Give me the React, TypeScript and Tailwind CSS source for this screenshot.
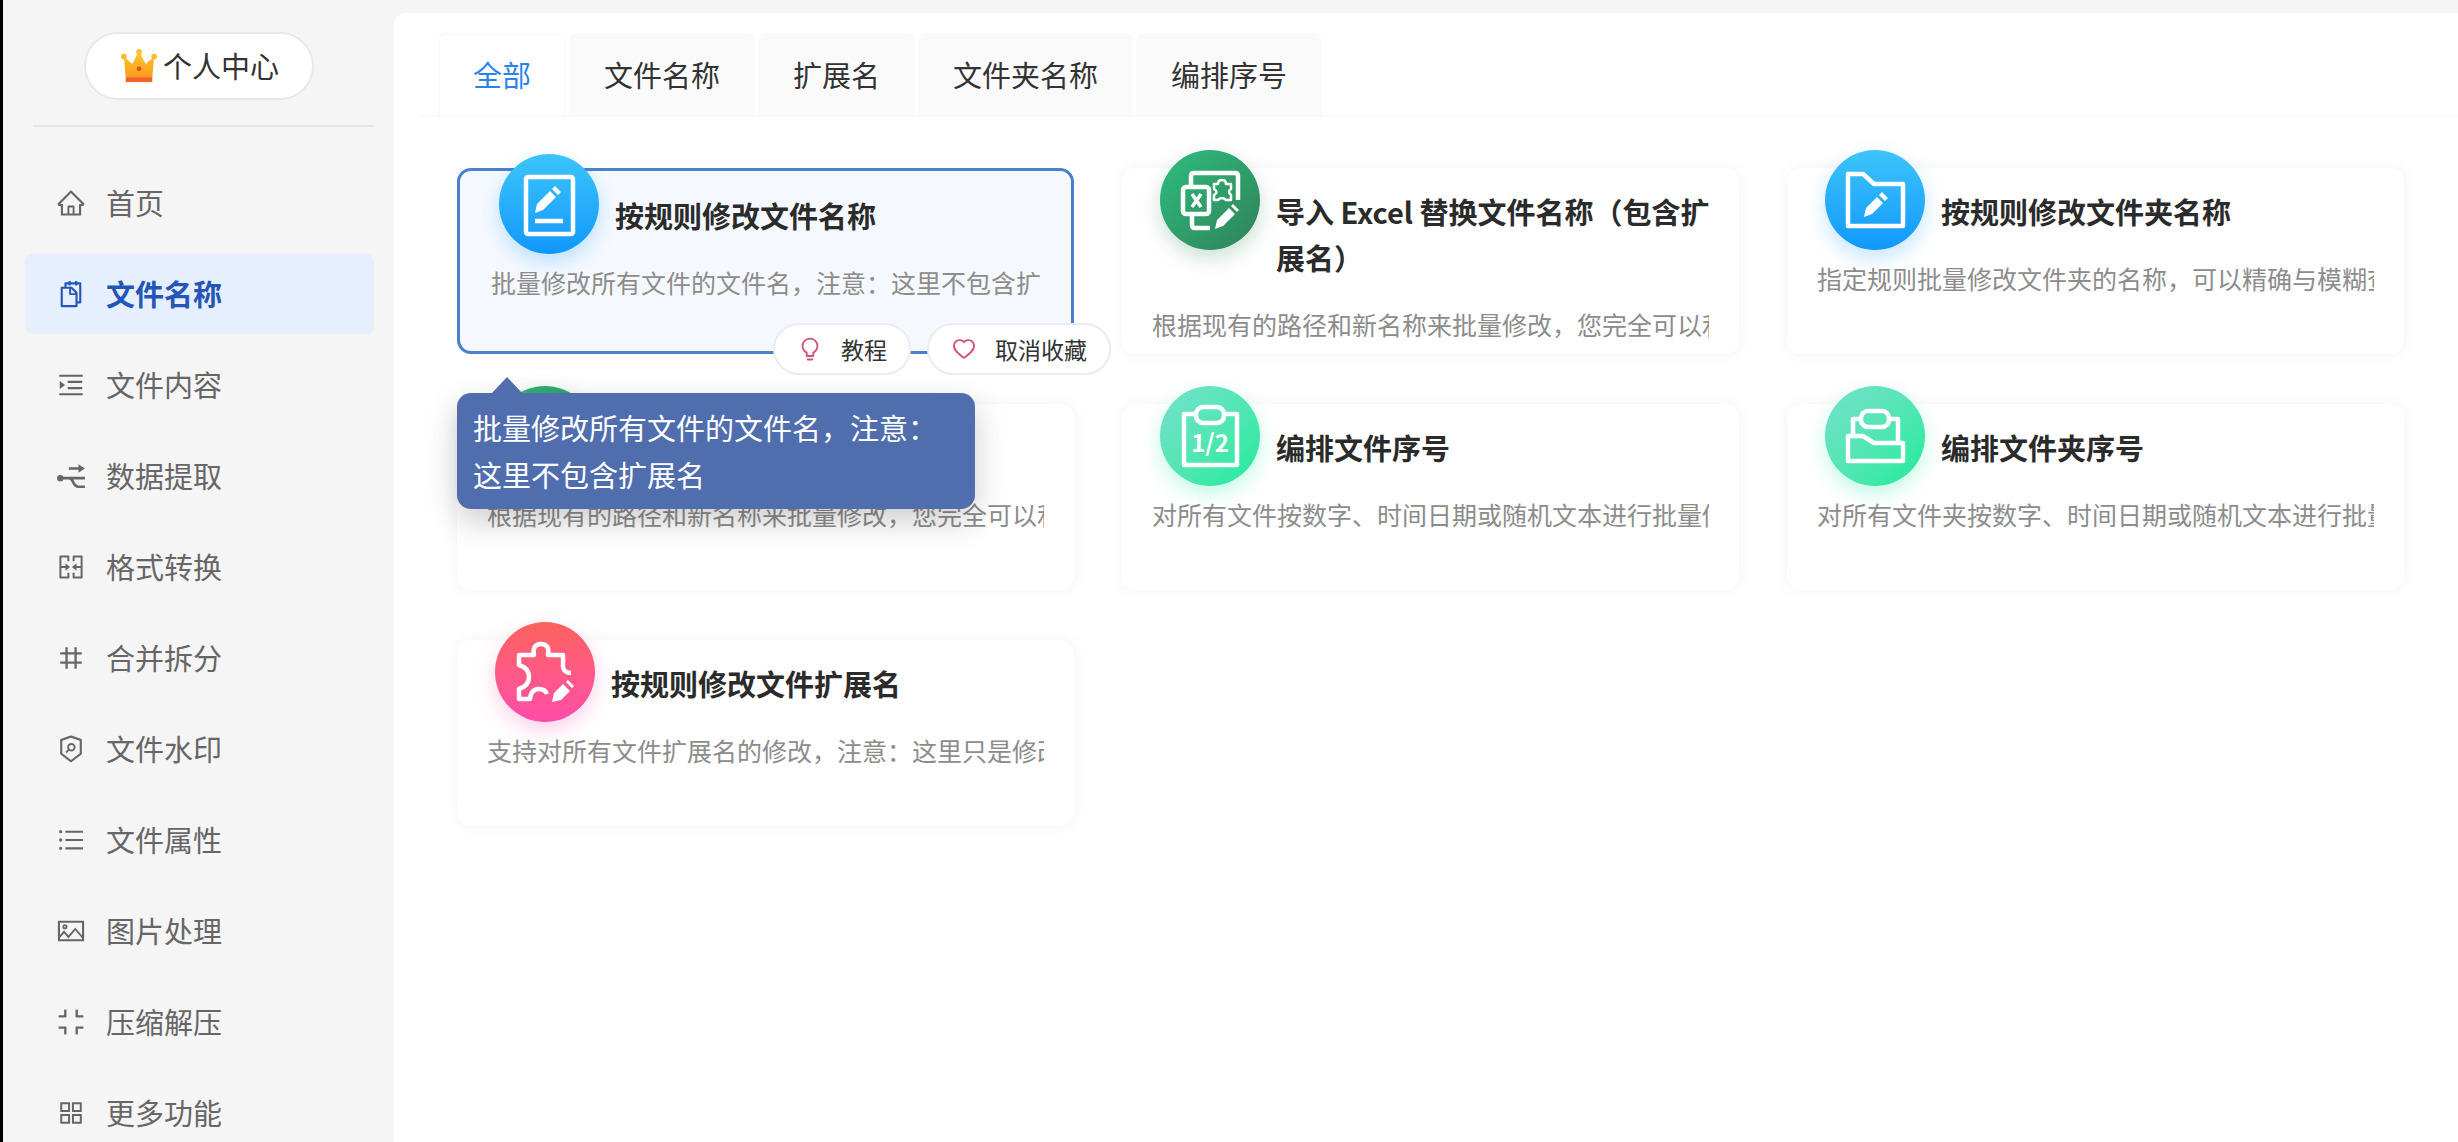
import type { ReactNode } from 'react';
import {
  AiOutlineAppstore,
  AiOutlineBulb,
  AiOutlineCompress,
  AiOutlineHeart,
  AiOutlineHome,
  AiOutlineMenuUnfold,
  AiOutlineMergeCells,
  AiOutlineNumber,
  AiOutlinePicture,
  AiOutlineSecurityScan,
  AiOutlineSnippets,
  AiOutlineUnorderedList,
} from 'react-icons/ai';

const ExtractIcon = () => (
  <svg viewBox="0 0 28 28" className="size-[30px]" fill="none" stroke="currentColor" strokeWidth="2.4">
    <path d="M12 7h11M4 16h23M12 16c5 0 3 8 9 8h6" />
    <path d="M21 3l6 4-6 4z" fill="currentColor" stroke="none" />
    <circle cx="4" cy="16" r="3" fill="currentColor" stroke="none" />
  </svg>
);

const Crown = () => (
  <svg viewBox="0 0 40 38" className="h-9 w-10">
    <defs>
      <linearGradient id="crown" x1="0" y1="0" x2="0" y2="1">
        <stop offset="0" stopColor="#fbcb2e" />
        <stop offset="1" stopColor="#fa981c" />
      </linearGradient>
    </defs>
    <path d="M4 9l9 8 7-14 7 14 9-8-2 23H6z" fill="url(#crown)" />
    <circle cx="20" cy="4" r="3" fill="#fbc52e" />
    <circle cx="4" cy="9" r="3" fill="#fbb92e" />
    <circle cx="36" cy="9" r="3" fill="#fbb92e" />
    <path d="M6 31h28v5H6z" fill="#f0622a" />
    <circle cx="20" cy="22" r="2.5" fill="#d9541e" />
  </svg>
);

const PageEditIcon = () => (
  <>
    <rect x="27" y="23" width="47" height="57" rx="2" />
    <path d="M36 67h28" />
    <path d="M36 59l2-9 13-13 6 6-13 13zM53 35l3-3 6 6-3 3z" fill="#fff" stroke="none" />
  </>
);

const ExcelIcon = () => (
  <>
    <path d="M31 36V26q0-3 3-3h41q3 0 3 3v24M32 65v10q0 3 3 3h15" />
    <rect x="23" y="37" width="26" height="27" rx="3" />
    <path d="M32 44l9 13M41 44l-9 13" strokeWidth="3.5" />
    <path d="M54 34h4q0-4 4-4t4 4h5v5q-4 2 0 6v5h-5q-4-4-8 0h-4v-5q5-3 0-6z" strokeWidth="2.5" />
    <path d="M55 79l2-9 12-12 6 6-12 12zM71 56l2-2 6 6-2 2z" fill="#fff" stroke="none" />
  </>
);

const FolderEditIcon = () => (
  <>
    <path d="M23 24h15l11 10h29v42H23z" />
    <path d="M39 67l2-9 11-11 6 6-11 11zM54 45l3-3 6 6-3 3z" fill="#fff" stroke="none" />
  </>
);

const FileOrderIcon = () => (
  <>
    <path d="M36 28H24v51h53V28H64" />
    <rect x="36" y="21" width="28" height="16" rx="7" />
    <text x="50" y="66" textAnchor="middle" className="font-bold" fontSize="24" fill="#fff" stroke="none">1/2</text>
  </>
);

const FolderOrderIcon = () => (
  <>
    <path d="M36 33h-8v16M64 33h9v22" />
    <rect x="36" y="25" width="28" height="16" rx="7" />
    <path d="M23 50h15l11 7h29v18H23z" />
  </>
);

const PuzzleIcon = () => (
  <>
    <path d="M76 51q-7 0-8-6V33H53q2-11-7-11t-7 11H24v10q10 3 10 12t-10 12v10h11q1-10 9-10 6 0 8 5" />
    <path d="M57 80l2-9 9-9 7 7-9 9zM71 60l2-2 6 6-2 2z" fill="#fff" stroke="none" />
  </>
);

const NAV = [
  { text: '首页', icon: <AiOutlineHome /> },
  { text: '文件名称', icon: <AiOutlineSnippets />, active: true },
  { text: '文件内容', icon: <AiOutlineMenuUnfold /> },
  { text: '数据提取', icon: <ExtractIcon /> },
  { text: '格式转换', icon: <AiOutlineMergeCells /> },
  { text: '合并拆分', icon: <AiOutlineNumber /> },
  { text: '文件水印', icon: <AiOutlineSecurityScan /> },
  { text: '文件属性', icon: <AiOutlineUnorderedList /> },
  { text: '图片处理', icon: <AiOutlinePicture /> },
  { text: '压缩解压', icon: <AiOutlineCompress /> },
  { text: '更多功能', icon: <AiOutlineAppstore /> },
];

const TABS = ['全部', '文件名称', '扩展名', '文件夹名称', '编排序号'];

const BLUE = 'bg-linear-to-b from-[#3cc4fb] to-[#0f98fa] shadow-[0_8px_20px_rgba(15,152,250,0.25)]';
const GREEN = 'bg-linear-to-br from-[#2cbd7e] to-[#2f8259] shadow-[0_8px_20px_rgba(47,130,89,0.25)]';
const TEAL = 'bg-linear-to-br from-[#74e0cc] to-[#0aeb9a] shadow-[0_8px_20px_rgba(10,235,154,0.25)]';
const PINK = 'bg-linear-to-b from-[#fd625a] to-[#ff4caa] shadow-[0_8px_20px_rgba(255,76,170,0.25)]';

type CardProps = {
  title: string;
  desc: string;
  color: string;
  icon: ReactNode;
  active?: boolean;
};

const CARDS: CardProps[] = [
  { title: '按规则修改文件名称', desc: '批量修改所有文件的文件名，注意：这里不包含扩展名', color: BLUE, icon: <PageEditIcon />, active: true },
  { title: '导入 Excel 替换文件名称（包含扩展名）', desc: '根据现有的路径和新名称来批量修改，您完全可以利用 Excel 处理', color: GREEN, icon: <ExcelIcon /> },
  { title: '按规则修改文件夹名称', desc: '指定规则批量修改文件夹的名称，可以精确与模糊查找', color: BLUE, icon: <FolderEditIcon /> },
  { title: '导入 Excel 替换名称', desc: '根据现有的路径和新名称来批量修改，您完全可以利用 Excel 处理', color: GREEN, icon: <ExcelIcon /> },
  { title: '编排文件序号', desc: '对所有文件按数字、时间日期或随机文本进行批量修改', color: TEAL, icon: <FileOrderIcon /> },
  { title: '编排文件夹序号', desc: '对所有文件夹按数字、时间日期或随机文本进行批量修改', color: TEAL, icon: <FolderOrderIcon /> },
  { title: '按规则修改文件扩展名', desc: '支持对所有文件扩展名的修改，注意：这里只是修改扩展名', color: PINK, icon: <PuzzleIcon /> },
];

const Tooltip = ({ text }: { text: string }) => (
  <div role="tooltip" className="absolute top-[222px] -left-[3px] z-20 w-[518px] rounded-[14px] bg-[#506eae] px-4 py-[11px] text-[29px] leading-[47px] text-white shadow-[0_12px_32px_rgba(0,0,0,0.2)]">
    <svg viewBox="0 0 32 17" className="absolute -top-4 left-[34px] h-[17px] w-8" fill="#506eae">
      <path d="M0 17L16 0l16 17z" />
    </svg>
    {text}
  </div>
);

const PILL = 'flex h-[52px] items-center gap-[18px] rounded-full border-2 border-[#ececf0] bg-white px-[22px] text-[23px] text-[#333]';

const Card = ({ title, desc, color, icon, active }: CardProps) => (
  <article
    className={`relative min-h-[186px] rounded-[14px] ${
      active
        ? 'border-[3px] border-[#4a80cc] bg-[#f5f9ff] p-px'
        : 'bg-white shadow-[0_0_16px_rgba(0,0,0,0.05)]'
    }`}
  >
    <div className="flex items-start gap-4 pr-6 pl-[38px]">
      <div className={`-mt-[18px] -mb-6 size-[100px] shrink-0 rounded-full ${color}`}>
        <svg viewBox="0 0 100 100" fill="none" stroke="#fff" strokeWidth="4.5" strokeLinejoin="round">
          {icon}
        </svg>
      </div>
      <h2 className="pt-5 text-[29px] leading-[46px] font-bold text-[#2b2b2b]">{title}</h2>
    </div>
    <p className="mx-[30px] mt-[25px] overflow-hidden text-[25px] leading-[38px] whitespace-nowrap text-[#8c8c8c]">
      {desc}
    </p>
    {active && (
      <>
        <div className="absolute -right-10 -bottom-6 z-10 flex gap-4">
          <button type="button" className={PILL}>
            <AiOutlineBulb className="text-[26px] text-[#d4507c]" />
            教程
          </button>
          <button type="button" className={PILL}>
            <AiOutlineHeart className="text-[26px] text-[#d4507c]" />
            取消收藏
          </button>
        </div>
        <Tooltip text="批量修改所有文件的文件名，注意：这里不包含扩展名" />
      </>
    )}
  </article>
);

const Sidebar = () => (
  <aside className="w-[394px] shrink-0 border-l-[3px] border-black pt-8 pr-5 pl-[22px]">
    <div className="ml-2 border-b-2 border-[#e6e6e6] pb-[25px]">
      <button type="button" className="ml-[51px] flex h-[68px] w-[230px] items-center justify-center gap-1 rounded-full border-2 border-[#e8e8e8] bg-white text-[29px] text-[#333]">
        <Crown />
        个人中心
      </button>
    </div>
    <nav className="mt-9 flex flex-col gap-[11px]">
      {NAV.map(({ text, icon, active }) => (
        <a
          key={text}
          href="#"
          className={`flex h-20 items-center gap-5 rounded-lg pl-[31px] text-[29px] ${
            active ? 'bg-[#e6effd] font-bold text-[#2356b8]' : 'text-[#666]'
          }`}
        >
          <span className="text-[30px]">{icon}</span>
          {text}
        </a>
      ))}
    </nav>
  </aside>
);

const App = () => {
  return (
    <div className="flex h-screen overflow-hidden bg-[#f5f5f5] font-['Noto_Sans_CJK_SC',sans-serif]">
      <Sidebar />
      <main className="mt-[13px] min-w-0 flex-1 rounded-tl-xl bg-white">
        <div className="ml-6 flex gap-[3px] border-b-2 border-[#fafafa] pt-5 pl-5">
          {TABS.map((tab, i) => (
            <button
              key={tab}
              type="button"
              className={`h-[82px] rounded-t-lg border-2 border-b-0 border-[#fafafa] px-[33px] text-[29px] ${
                i === 0 ? 'bg-white text-[#2b83ea]' : 'bg-[#fafafa] text-[#333]'
              }`}
            >
              {tab}
            </button>
          ))}
        </div>
        <div className="mt-[51px] grid grid-cols-3 gap-x-12 gap-y-[50px] pr-[54px] pl-[63px]">
          {CARDS.map((card) => (
            <Card key={card.title} {...card} />
          ))}
        </div>
      </main>
    </div>
  );
};

export default App;
